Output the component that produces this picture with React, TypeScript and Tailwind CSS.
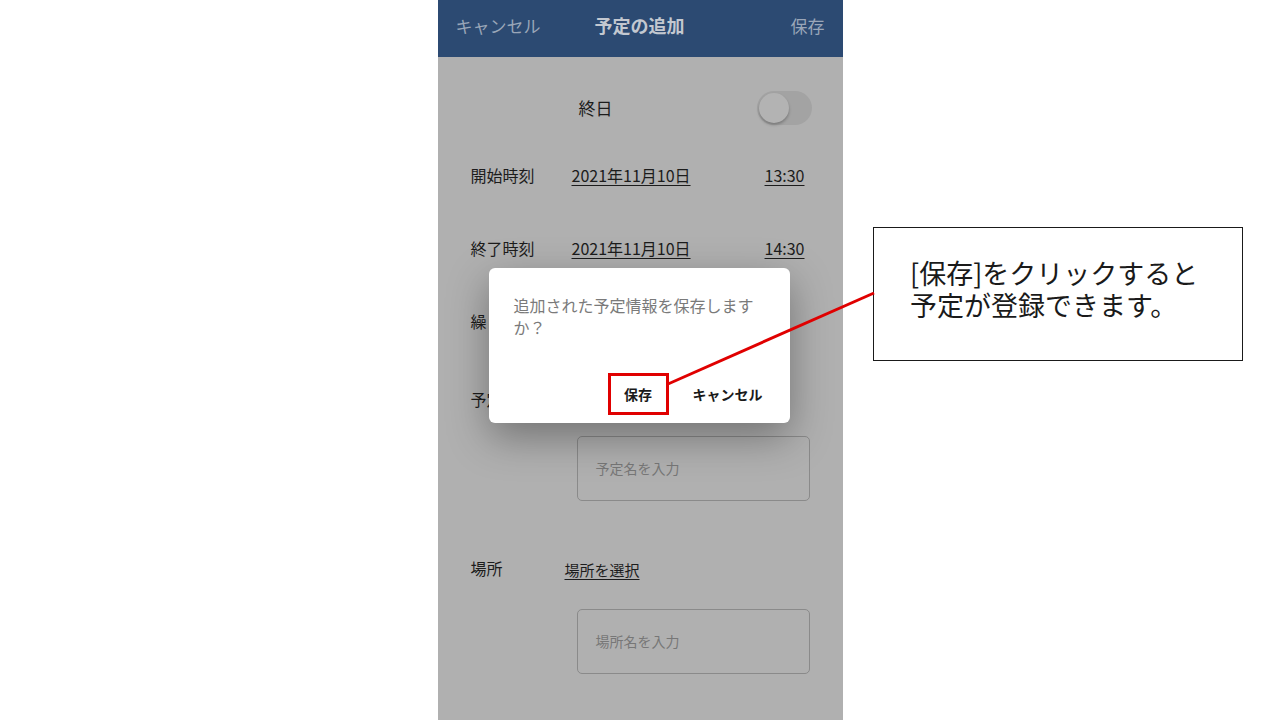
const FONT = { fontFamily: '"Noto Sans CJK JP", "Noto Sans", sans-serif' };

function DateRow({ label, date, time }: { label: string; date: string; time: string }) {
  return (
    <div className="flex items-center h-[30px] pl-[33px] pr-[38px]">
      <span className="w-[101px] text-[16px] text-[#1c1c1c]">{label}</span>
      <span className="text-[16px] text-[#1c1c1c] underline underline-offset-[3px]">{date}</span>
      <span className="ml-auto text-[16px] text-[#1c1c1c] underline underline-offset-[3px]">{time}</span>
    </div>
  );
}

function InputBox({ placeholder }: { placeholder: string }) {
  return (
    <div className="ml-[139px] mr-[33px] h-[65px] rounded-[5px] border border-[#8a8a8a] flex items-center pl-[18px]">
      <span className="text-[14px] text-[#777777]">{placeholder}</span>
    </div>
  );
}

function ConfirmDialog() {
  return (
    <div className="absolute left-[51px] top-[268px] w-[301px] h-[155px] bg-white rounded-[6px] shadow-[0_14px_40px_rgba(0,0,0,0.35)] flex flex-col">
      <p className="pl-[25px] pr-[30px] pt-[26px] text-[16px] leading-[22px] text-[#7a7a7a]">
        追加された予定情報を保存しますか？
      </p>
      <div className="mt-auto mb-[8px] flex items-center pr-[27px]">
        <div className="ml-auto w-[61px] h-[42px] border-[3px] border-[#e00000] flex items-center justify-center">
          <span className="text-[14px] font-bold text-[#1a1a1a]">保存</span>
        </div>
        <span className="ml-[24px] text-[14px] font-bold text-[#1a1a1a]">キャンセル</span>
      </div>
    </div>
  );
}

export default function App() {
  return (
    <div className="relative w-[1280px] h-[720px] bg-white overflow-hidden" style={FONT}>
      {/* phone screen (dimmed by dialog) */}
      <div className="relative mx-auto w-[405px] h-[720px] bg-[#b0b0b0]">
        <header className="h-[57px] bg-[#2c4a72] flex items-center px-[18px] pb-[6px]">
          <span className="text-[17px] text-[#9aa6b8]">キャンセル</span>
          <span className="ml-[54px] text-[18px] font-bold text-[#c3c8d0]">予定の追加</span>
          <span className="ml-auto text-[17px] text-[#9aa6b8]">保存</span>
        </header>

        <div className="mt-[34px] flex items-center h-[34px] pl-[141px] pr-[31px]">
          <span className="text-[17px] text-[#1c1c1c]">終日</span>
          <div className="ml-auto w-[55px] h-[34px] rounded-full bg-[#a3a3a3] p-[2px]">
            <div className="w-[30px] h-[30px] rounded-full bg-[#b3b3b3] shadow-[0_2px_3px_rgba(0,0,0,0.25)]" />
          </div>
        </div>

        <div className="mt-[35px]">
          <DateRow label="開始時刻" date="2021年11月10日" time="13:30" />
        </div>
        <div className="mt-[43px]">
          <DateRow label="終了時刻" date="2021年11月10日" time="14:30" />
        </div>

        <div className="mt-[43px] flex items-center h-[30px] pl-[33px]">
          <span className="text-[16px] text-[#1c1c1c]">繰り返し</span>
        </div>
        <div className="mt-[48px] flex items-center h-[30px] pl-[33px]">
          <span className="text-[16px] text-[#1c1c1c]">予定名</span>
        </div>

        <div className="mt-[22px]">
          <InputBox placeholder="予定名を入力" />
        </div>

        <div className="mt-[54px] flex items-center h-[30px] pl-[33px]">
          <span className="w-[94px] text-[16px] text-[#1c1c1c] -mt-[5px]">場所</span>
          <span className="text-[15px] text-[#1c1c1c] underline underline-offset-[3px]">場所を選択</span>
        </div>

        <div className="mt-[24px]">
          <InputBox placeholder="場所名を入力" />
        </div>

        <ConfirmDialog />
      </div>

      {/* annotation */}
      <div className="absolute left-[873px] top-[227px] w-[370px] h-[134px] border border-[#1a1a1a] bg-white pl-[36px] pt-[29px]">
        <p className="text-[27px] leading-[32px] text-[#1a1a1a]">[保存]をクリックすると</p>
        <p className="text-[27px] leading-[32px] text-[#1a1a1a]">予定が登録できます。</p>
      </div>
      <svg className="absolute left-0 top-0 pointer-events-none" width="1280" height="720">
        <line x1="668" y1="384" x2="874" y2="293" stroke="#e00000" strokeWidth="3" />
      </svg>
    </div>
  );
}
